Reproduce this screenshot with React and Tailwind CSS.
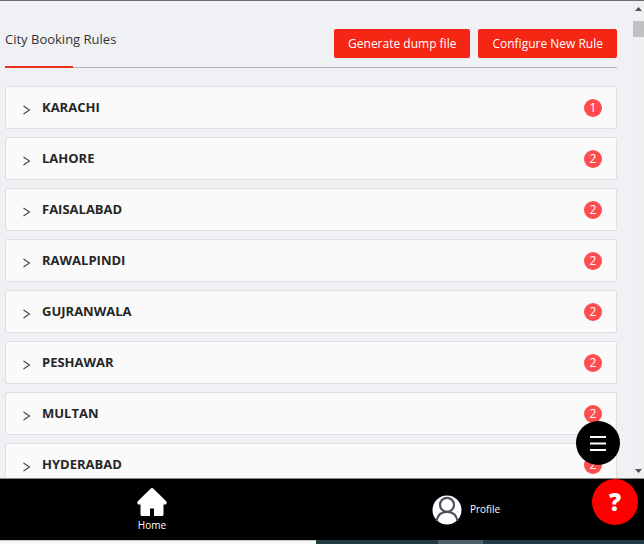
import { useState } from 'react';

const cities = [
  { id: 1, name: 'KARACHI', rules: 1 },
  { id: 2, name: 'LAHORE', rules: 2 },
  { id: 3, name: 'FAISALABAD', rules: 2 },
  { id: 4, name: 'RAWALPINDI', rules: 2 },
  { id: 5, name: 'GUJRANWALA', rules: 2 },
  { id: 6, name: 'PESHAWAR', rules: 2 },
  { id: 7, name: 'MULTAN', rules: 2 },
  { id: 8, name: 'HYDERABAD', rules: 2 },
];

function HomeIcon() {
  return (
    <svg width="30" height="28" viewBox="0 0 30 28" fill="#fff" aria-hidden="true">
      <path d="M13.8.6a1.800 1.800 0 0 1 2.400 0L29 13c1.300 1.400.6 3.600-1.200 3.600H26.500V26.500q0 1.500-1.500 1.500H17V20.500h-4V28H5Q3.500 28 3.500 26.500V16.600H2.200C.4 16.600-.3 14.400 1 13z" />
    </svg>
  );
}

function ProfileIcon() {
  return (
    <svg width="30" height="30" viewBox="0 0 30 30" fill="none" aria-hidden="true">
      <circle cx="15" cy="15" r="14.500" fill="#fff" />
      <g stroke="#4b535e" strokeWidth="2.200">
        <circle cx="15" cy="9.800" r="7" />
        <path d="M4.500 26c1-5.800 5-9.200 10.500-9.200s9.500 3.400 10.500 9.200" />
      </g>
    </svg>
  );
}

function CityRow({ city, open, onToggle }) {
  return (
    <li className="border border-[#dedfe0] rounded-xs bg-[#fafafa]">
      <button type="button" aria-expanded={open} onClick={onToggle}
        className="flex items-center w-full h-[41px] pl-[17px] pr-[14px] text-left">
        <svg className={open ? 'mt-1 rotate-90' : 'mt-1'} width="8" height="10" viewBox="0 0 8 10" fill="none"
          stroke="#444" strokeWidth="1.100" aria-hidden="true">
          <path d="M.5 1L6.500 5l-6 4" />
        </svg>
        <span className="flex-1 ml-[11px] text-[13px] font-bold text-[#262626]">{city.name}</span>
        <span className="flex items-center justify-center size-[18px] mt-px rounded-full bg-[#ff4d4f] text-xs text-white">
          {city.rules}
        </span>
      </button>
      {open && <p className="border-t border-[#dedfe0] p-4 text-[13px]">{city.rules}</p>}
    </li>
  );
}

export default function App() {
  const [openId, setOpenId] = useState(null);

  return (
    <div className="relative flex flex-col h-screen overflow-hidden bg-[#f0f1f5] border-t border-[#6b6a72] font-['Open_Sans','Noto_Sans',sans-serif]">
      <div className="flex flex-1 min-h-0">
        <main className="flex-1 min-w-0 overflow-hidden pl-[5px] pr-4 pt-7">
          <header className="relative flex items-start justify-between border-b border-[#b1b5bb] pb-[9px]">
            <h1 className="text-[13px] leading-5 text-[#333]">City Booking Rules</h1>
            <div className="flex gap-2">
              <button type="button" className="h-[29px] px-[14px] rounded-xs bg-[#f52613] text-xs text-white shadow-xs">
                Generate dump file
              </button>
              <button type="button" className="h-[29px] px-[14px] rounded-xs bg-[#f52613] text-xs text-white shadow-xs">
                Configure New Rule
              </button>
            </div>
            <span className="absolute left-0 -bottom-px w-[68px] h-0.5 bg-[#f03020]" />
          </header>

          <ul className="flex flex-col gap-2 mt-[18px]">
            {cities.map(c => (
              <CityRow key={c.id} city={c} open={openId === c.id}
                onToggle={() => setOpenId(openId === c.id ? null : c.id)} />
            ))}
          </ul>
        </main>

        <div className="flex flex-col items-center w-[11px] bg-[#f0f0f0]" aria-hidden="true">
          <svg className="mt-[6px]" width="7" height="4" viewBox="0 0 7 4"><path d="M3.500 0L7 4H0z" fill="#505050" /></svg>
          <div className="w-full h-4 mt-[10px] bg-[#c1c1c1]" />
          <svg className="mt-auto mb-[5px]" width="7" height="4" viewBox="0 0 7 4"><path d="M3.500 4L7 0H0z" fill="#505050" /></svg>
        </div>
      </div>

      <nav className="grid grid-cols-2 h-[62px] pr-4 border-t border-[#8a8a8a] bg-black text-white text-[10px]">
        <a href="#home" className="flex flex-col items-center gap-0.5 pt-[9px] pr-[10px]">
          <HomeIcon />
          <span>Home</span>
        </a>
        <a href="#profile" className="flex items-center justify-center gap-2 pr-[10px]">
          <ProfileIcon />
          <span>Profile</span>
        </a>
      </nav>

      <div className="flex h-1 bg-[#223b48]" aria-hidden="true">
        <div className="w-[49%] border-t border-[#c8c8c8] bg-[#f8f8f8]" />
        <div className="w-[19%] bg-[#233c44]" />
        <div className="w-[7%] bg-[#50606a]" />
      </div>

      <button type="button" aria-label="Menu"
        className="absolute right-6 bottom-[79px] flex items-center justify-center size-11 rounded-full bg-black">
        <svg width="16" height="15" viewBox="0 0 16 15" fill="#fff" aria-hidden="true">
          <path d="M0 0h16v2H0zM0 6.500h16v2H0zM0 13h16v2H0z" />
        </svg>
      </button>
      <button type="button" aria-label="Help"
        className="absolute right-[6px] bottom-[19px] flex items-center justify-center size-[46px] rounded-full bg-[#ff0000] text-white text-2xl font-extrabold">
        ?
      </button>
    </div>
  );
}
